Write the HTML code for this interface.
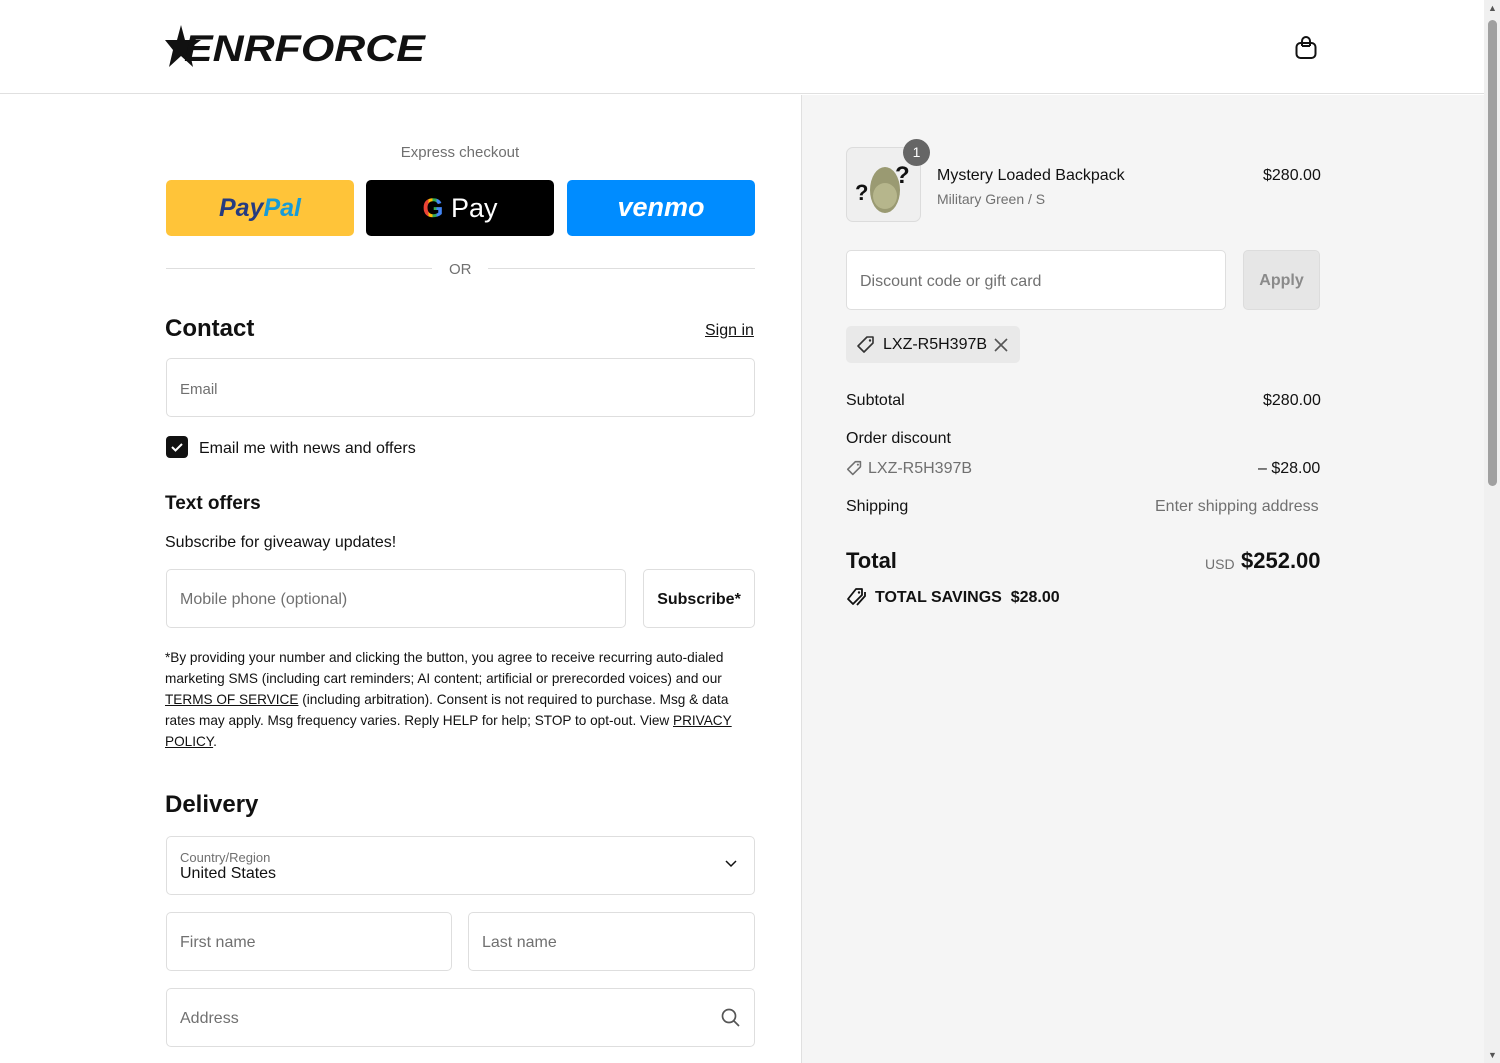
<!DOCTYPE html>
<html><head><meta charset="utf-8">
<style>
*{box-sizing:border-box;margin:0;padding:0}
body{width:1500px;height:1063px;overflow:hidden;font-family:"Liberation Sans",sans-serif;color:#111;background:#fff;position:relative}
.a{position:absolute}
.inp{position:absolute;border:1px solid #dedede;border-radius:5px;background:#fff;font-size:15px;color:#707070;padding-left:13px;display:flex;align-items:center}
.r{position:absolute;font-size:15px}
</style></head><body>
<div class="a" style="left:0;top:0;width:1484px;height:94px;border-bottom:1px solid #e0e0e0;background:#fff"></div>
<svg class="a" style="left:165px;top:25px" width="44" height="44" viewBox="0 0 44 44"><polygon points="16,0 20,15 36,15 24,24 28,42 16,31 4,42 8,25 0,15 12,15" fill="#111"/></svg>
<div class="a" style="left:184px;top:28px;font-size:37px;font-weight:900;font-style:italic;transform:scaleX(1.16);transform-origin:left;color:#111">ENRFORCE</div>
<svg class="a" style="left:1294px;top:34px" width="24" height="26" viewBox="0 0 24 26"><rect x="2.5" y="9" width="19" height="15" rx="4" fill="none" stroke="#111" stroke-width="2"/><path d="M8 12V7a4 4 0 0 1 8 0v5" fill="none" stroke="#111" stroke-width="2"/><path d="M8 12h8" stroke="#111" stroke-width="2"/></svg>
<div class="a" style="left:801px;top:95px;width:683px;height:968px;background:#f5f5f5;border-left:1px solid #e0e0e0"></div>
<div class="a" style="left:1484px;top:0;width:16px;height:1063px;background:#f0f0f0"></div>
<div class="a" style="left:1488px;top:20px;width:9px;height:466px;background:#a0a0a0;border-radius:5px"></div>
<div class="a" style="left:1488px;top:3px;font-size:9px;color:#555">▲</div>
<div class="a" style="left:1488px;top:1050px;font-size:9px;color:#555">▼</div>

<div class="r" style="left:0;width:920px;top:144px;text-align:center;color:#707070">Express checkout</div>
<div class="a" style="left:166px;top:180px;width:188px;height:56px;background:#ffc439;border-radius:5px;text-align:center;line-height:56px;font-size:25px;font-weight:bold;font-style:italic"><span style="color:#253b80">Pay</span><span style="color:#179bd7">Pal</span></div>
<div class="a" style="left:366px;top:180px;width:188px;height:56px;background:#000;border-radius:5px;text-align:center;line-height:56px;font-size:27px;color:#fff"><span style="font-weight:bold;background:linear-gradient(90deg,#ea4335 0 30%,#fbbc05 30% 50%,#34a853 50% 70%,#4285f4 70%);-webkit-background-clip:text;color:transparent">G</span> Pay</div>
<div class="a" style="left:567px;top:180px;width:188px;height:56px;background:#008cff;border-radius:5px;text-align:center;line-height:54px;font-size:27px;font-weight:bold;font-style:italic;color:#fff">venmo</div>
<div class="a" style="left:166px;top:268px;width:266px;height:1px;background:#dedede"></div>
<div class="a" style="left:488px;top:268px;width:267px;height:1px;background:#dedede"></div>
<div class="r" style="left:449px;top:261px;color:#707070">OR</div>
<div class="a" style="left:165px;top:315px;font-size:24px;font-weight:bold">Contact</div>
<div class="r" style="left:705px;top:322px;text-decoration:underline;font-size:16px">Sign in</div>
<div class="inp" style="left:166px;top:358px;width:589px;height:59px;padding-top:3px">Email</div>
<div class="a" style="left:166px;top:436px;width:22px;height:22px;background:#111;border-radius:4px"><svg width="22" height="22"><path d="M6 11l3.5 3.5L16 8" stroke="#fff" stroke-width="2" fill="none"/></svg></div>
<div class="r" style="left:199px;top:440px;font-size:16px">Email me with news and offers</div>
<div class="a" style="left:165px;top:493px;font-size:19px;font-weight:bold">Text offers</div>
<div class="r" style="left:165px;top:534px;font-size:16px">Subscribe for giveaway updates!</div>
<div class="inp" style="left:166px;top:569px;width:460px;height:59px;font-size:16px;padding-top:3px">Mobile phone (optional)</div>
<div class="a" style="left:643px;top:569px;width:112px;height:59px;border:1px solid #dedede;border-radius:5px;text-align:center;line-height:59px;font-size:16px;font-weight:bold">Subscribe*</div>
<div class="a" style="left:165px;top:647px;width:595px;font-size:13.6px;line-height:21px;color:#111">*By providing your number and clicking the button, you agree to receive recurring auto-dialed marketing SMS (including cart reminders; AI content; artificial or prerecorded voices) and our <u>TERMS OF SERVICE</u> (including arbitration). Consent is not required to purchase. Msg &amp; data rates may apply. Msg frequency varies. Reply HELP for help; STOP to opt-out. View <u>PRIVACY POLICY</u>.</div>
<div class="a" style="left:165px;top:791px;font-size:24px;font-weight:bold">Delivery</div>
<div class="inp" style="left:166px;top:836px;width:589px;height:59px;flex-direction:column;align-items:flex-start;justify-content:center;padding-top:2px"><div style="font-size:13px">Country/Region</div><div style="font-size:16px;color:#111">United States</div></div>
<svg class="a" style="left:725px;top:860px" width="12" height="8"><path d="M1 1l5 5 5-5" stroke="#111" stroke-width="1.5" fill="none"/></svg>
<div class="inp" style="left:166px;top:912px;width:286px;height:59px;font-size:16px;padding-top:3px">First name</div>
<div class="inp" style="left:468px;top:912px;width:287px;height:59px;font-size:16px;padding-top:3px">Last name</div>
<div class="inp" style="left:166px;top:988px;width:589px;height:59px;font-size:16px;padding-top:3px">Address</div>
<svg class="a" style="left:721px;top:1008px" width="20" height="20"><circle cx="8" cy="8" r="6.5" stroke="#555" stroke-width="1.7" fill="none"/><path d="M13 13l5 5" stroke="#555" stroke-width="1.7"/></svg>

<div class="a" style="left:846px;top:147px;width:75px;height:75px;border:1px solid #dcdcdc;border-radius:7px;background:#efefef;overflow:hidden">
<svg width="75" height="75"><ellipse cx="38" cy="42" rx="15" ry="23" fill="#9a9a72"/><ellipse cx="38" cy="48" rx="12" ry="13" fill="#b6b68c"/><text x="8" y="52" font-size="22" font-weight="bold" fill="#111" font-family="Liberation Sans">?</text><text x="48" y="35" font-size="24" font-weight="bold" fill="#111" font-family="Liberation Sans">?</text></svg></div>
<div class="a" style="left:903px;top:139px;width:27px;height:27px;border-radius:50%;background:#666;color:#fff;font-size:14px;text-align:center;line-height:27px">1</div>
<div class="r" style="left:937px;top:167px;font-size:16px">Mystery Loaded Backpack</div>
<div class="r" style="left:937px;top:191px;font-size:14px;color:#707070">Military Green / S</div>
<div class="r" style="left:1263px;top:167px;font-size:16px">$280.00</div>
<div class="inp" style="left:846px;top:250px;width:380px;height:60px;font-size:16px;padding-top:3px">Discount code or gift card</div>
<div class="a" style="left:1243px;top:250px;width:77px;height:60px;background:#e6e6e6;border:1px solid #dcdcdc;border-radius:5px;text-align:center;line-height:60px;font-size:16px;font-weight:bold;color:#8a8a8a">Apply</div>
<div class="a" style="left:846px;top:326px;width:174px;height:37px;background:#e9e9e9;border-radius:5px"></div>
<svg class="a" style="left:856px;top:335px" width="20" height="20" viewBox="0 0 20 20"><path d="M11 2h6v6l-9 9-6-6z" fill="none" stroke="#333" stroke-width="1.6" stroke-linejoin="round"/><circle cx="14" cy="5.5" r="1.2" fill="#333"/></svg>
<div class="r" style="left:883px;top:336px;font-size:16px">LXZ-R5H397B</div>
<svg class="a" style="left:994px;top:338px" width="14" height="14"><path d="M1 1l12 12M13 1L1 13" stroke="#555" stroke-width="1.6"/></svg>
<div class="r" style="left:846px;top:392px;font-size:16px">Subtotal</div>
<div class="r" style="left:1263px;top:392px;font-size:16px">$280.00</div>
<div class="r" style="left:846px;top:430px;font-size:16px">Order discount</div>
<svg class="a" style="left:846px;top:460px" width="17" height="17" viewBox="0 0 20 20"><path d="M11 2h6v6l-9 9-6-6z" fill="none" stroke="#707070" stroke-width="1.8" stroke-linejoin="round"/><circle cx="14" cy="5.5" r="1.2" fill="#707070"/></svg>
<div class="r" style="left:868px;top:460px;font-size:16px;color:#707070">LXZ-R5H397B</div>
<div class="r" style="left:1258px;top:460px;font-size:16px">– $28.00</div>
<div class="r" style="left:846px;top:498px;font-size:16px">Shipping</div>
<div class="r" style="left:1155px;top:498px;font-size:16px;color:#707070">Enter shipping address</div>
<div class="a" style="left:846px;top:548px;font-size:22px;font-weight:bold">Total</div>
<div class="a" style="left:1205px;top:556px;font-size:14px;color:#707070">USD</div>
<div class="a" style="left:1241px;top:548px;font-size:22px;font-weight:bold">$252.00</div>
<svg class="a" style="left:846px;top:587px" width="22" height="20" viewBox="0 0 22 20"><path d="M10 2h6v6l-9 9-5-5z" fill="none" stroke="#111" stroke-width="1.8" stroke-linejoin="round"/><path d="M19 5v4l-8 9" fill="none" stroke="#111" stroke-width="1.8"/><circle cx="13" cy="5.5" r="1.2" fill="#111"/></svg>
<div class="r" style="left:875px;top:589px;font-size:16px;font-weight:bold">TOTAL SAVINGS&nbsp; $28.00</div>
</body></html>
